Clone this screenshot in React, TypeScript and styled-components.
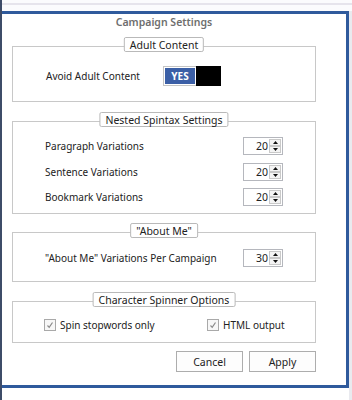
import * as React from "react";
import styled, { createGlobalStyle } from "styled-components";

const GlobalStyle = createGlobalStyle`
    html, body {
        margin: 0;
        padding: 0;
        background: #ffffff;
    }
    body {
        font-family: "Noto Sans", "Open Sans", sans-serif;
        font-size: 10px;
        color: #222222;
    }
`

const Screen = styled.div`
    width: 352px;
    height: 400px;
    box-sizing: border-box;
    border-left: 2px solid #3e4c68;
    background: linear-gradient(to right, #ffffff 347px, #e9eaef 347px);
    overflow: hidden;
`

const TopStrip = styled.div`
    height: 11px;
    box-sizing: border-box;
    padding-top: 3px;
    background: #fbfbfd;

    &::before {
        content: "";
        display: block;
        height: 2px;
        background: #e6e4ec;
    }
`

const Window = styled.div`
    width: 347px;
    height: 377px;
    box-sizing: border-box;
    border-top: 3px solid #2f5a9c;
    border-right: 3px solid #2f5a9c;
    border-bottom: 3px solid #2f5a9c;
    background: #ffffff;
    padding: 0 0 0 10px;
`

const Title = styled.div`
    width: 304px;
    height: 16px;
    line-height: 16px;
    text-align: center;
    font-size: 10.5px;
    font-weight: 600;
    color: #6e6e6e;
`

const Group = styled.div<{ $top: number; $pt: number; $pb: number }>`
    position: relative;
    width: 304px;
    box-sizing: border-box;
    margin-top: ${p => p.$top}px;
    padding: ${p => p.$pt}px 32px ${p => p.$pb}px 32px;
    border: 1px solid #c8c8c8;
    display: flex;
    flex-direction: column;
    gap: 7.5px;
`

const Legend = styled.div`
    position: absolute;
    top: -10px;
    left: 50%;
    transform: translateX(-50%);
    height: 15px;
    line-height: 14px;
    box-sizing: border-box;
    padding: 0 5px;
    border: 1px solid #b9b9b9;
    border-radius: 2px;
    background: #ffffff;
    white-space: nowrap;
    font-size: 10.5px;
    color: #222222;
`

const Row = styled.div`
    display: flex;
    align-items: center;
    justify-content: space-between;
    height: 18px;
`

const ToggleRow = styled.div`
    display: grid;
    grid-template-columns: 117px auto;
    align-items: center;
    height: 20px;
    margin-left: 1px;
`

const Label = styled.span`
    white-space: nowrap;
    color: #222222;
`

const Toggle = styled.div`
    display: flex;
    width: 58px;
    height: 20px;
    box-sizing: border-box;
    border: 1px solid #c4c4c4;
    border-right: none;
`

const ToggleOn = styled.div`
    width: 30px;
    margin: 1px;
    background: #3b5fa6;
    color: #ffffff;
    font-weight: 700;
    font-size: 10px;
    display: flex;
    align-items: center;
    justify-content: center;
`

const ToggleOff = styled.div`
    flex: 1;
    background: #000000;
    margin: -1px 0;
`

const Spinner = styled.div`
    display: flex;
    width: 40px;
    height: 18px;
    box-sizing: border-box;
    border: 1px solid #b5b7bd;
    background: #ffffff;
`

const SpinValue = styled.div`
    flex: 1;
    text-align: right;
    line-height: 16px;
    padding-right: 1px;
    font-size: 10.5px;
    color: #222222;
`

const SpinButtons = styled.div`
    width: 12px;
    display: flex;
    flex-direction: column;
    padding: 1px 1px 1px 0;
`

const SpinButton = styled.div`
    flex: 1;
    border: 1px solid #c9c9c9;
    background: #f4f4f4;
    display: flex;
    align-items: center;
    justify-content: center;
`

const CheckRow = styled.div`
    display: grid;
    grid-template-columns: 163px auto;
    align-items: center;
    height: 14px;
    margin-left: -1px;
`

const Check = styled.label`
    display: flex;
    align-items: center;
    gap: 4px;
    white-space: nowrap;
    color: #222222;
`

const CheckBox = styled.span`
    width: 10px;
    height: 10px;
    border: 1px solid #a9a9a9;
    background: #f7f7f7;
    display: flex;
    align-items: center;
    justify-content: center;
`

const Buttons = styled.div`
    width: 304px;
    display: flex;
    justify-content: flex-end;
    gap: 6px;
    margin-top: 8px;
`

const Button = styled.button`
    width: 67px;
    height: 21px;
    box-sizing: border-box;
    border: 1px solid #adadad;
    background: #fdfdfd;
    font-family: inherit;
    font-size: 10.5px;
    color: #222222;
    padding: 0;
`

const Arrow = ({ up }: { up?: boolean }) => (
    <svg width="5" height="3" viewBox="0 0 5 3">
        <path d={up ? "M0 3 L2.5 0 L5 3 Z" : "M0 0 L2.5 3 L5 0 Z"} fill="#111" />
    </svg>
)

const NumberSpin = ({ value }: { value: number }) => (
    <Spinner>
        <SpinValue>{value}</SpinValue>
        <SpinButtons>
            <SpinButton><Arrow up /></SpinButton>
            <SpinButton><Arrow /></SpinButton>
        </SpinButtons>
    </Spinner>
)

const Tick = () => (
    <svg width="8" height="8" viewBox="0 0 8 8">
        <path d="M1.5 4.5 L3.2 6.3 L6.5 1.5" stroke="#8a8a8a" strokeWidth="1.2" fill="none" />
    </svg>
)

export default function App() {
    return (
        <>
            <GlobalStyle />
            <Screen>
                <TopStrip />
                <Window>
                    <Title>Campaign Settings</Title>

                    <Group $top={16} $pt={19} $pb={15}>
                        <Legend>Adult Content</Legend>
                        <ToggleRow>
                            <Label>Avoid Adult Content</Label>
                            <Toggle>
                                <ToggleOn>YES</ToggleOn>
                                <ToggleOff />
                            </Toggle>
                        </ToggleRow>
                    </Group>

                    <Group $top={19} $pt={15} $pb={7}>
                        <Legend>Nested Spintax Settings</Legend>
                        <Row>
                            <Label>Paragraph Variations</Label>
                            <NumberSpin value={20} />
                        </Row>
                        <Row>
                            <Label>Sentence Variations</Label>
                            <NumberSpin value={20} />
                        </Row>
                        <Row>
                            <Label>Bookmark Variations</Label>
                            <NumberSpin value={20} />
                        </Row>
                    </Group>

                    <Group $top={18} $pt={16} $pb={14}>
                        <Legend>"About Me"</Legend>
                        <Row>
                            <Label>"About Me" Variations Per Campaign</Label>
                            <NumberSpin value={30} />
                        </Row>
                    </Group>

                    <Group $top={19} $pt={16} $pb={10}>
                        <Legend>Character Spinner Options</Legend>
                        <CheckRow>
                            <Check><CheckBox><Tick /></CheckBox>Spin stopwords only</Check>
                            <Check><CheckBox><Tick /></CheckBox>HTML output</Check>
                        </CheckRow>
                    </Group>

                    <Buttons>
                        <Button>Cancel</Button>
                        <Button>Apply</Button>
                    </Buttons>
                </Window>
            </Screen>
        </>
    )
}
